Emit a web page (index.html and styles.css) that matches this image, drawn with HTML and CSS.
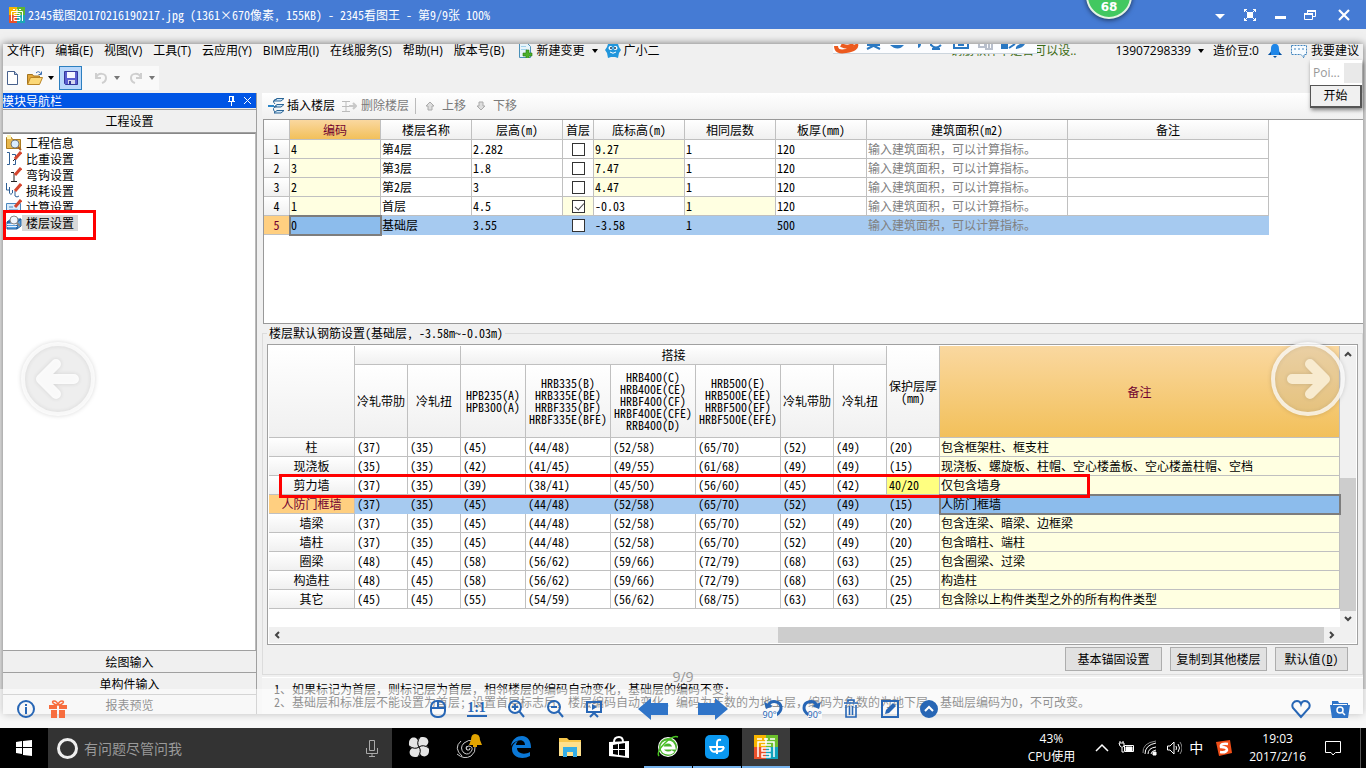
FILE: index.html
```html
<!DOCTYPE html>
<html lang="zh-CN">
<head>
<meta charset="utf-8">
<title>2345看图王</title>
<link rel="stylesheet" href="styles.css">
</head>
<body>
<header class="titlebar">
  <svg class="logo" viewBox="0 0 16 16"><path fill="#f7b500" d="M0 0h8v8H0z"/><path fill="#5db531" d="M8 0h8v8H8z"/><path fill="#e8502a" d="M0 8h8v8H0z"/><path fill="#1ba7b5" d="M8 8h8v8H8z"/><path fill="none" stroke="#fff" d="M2.500 14V4.500h11V14M4 2.500h2M10 2.500h2M5 6.500h6v2H5zM5 10.500h6v3H5zM8 2v4"/></svg>
  <h1 class="titletext">2345截图20170216190217.jpg (1361×670像素, 155KB) - 2345看图王 - 第9/9张 100%</h1>
  <div class="winbtns">
    <button aria-label="菜单"><svg viewBox="0 0 14 14"><path fill="#fff" d="M2 6h10l-5 5z"/></svg></button>
    <button aria-label="全屏"><svg viewBox="0 0 14 14"><path fill="#fff" d="M4 4h6v6H4z"/><path fill="none" stroke="#fff" d="M1.500 4V1.500H4M10 1.500h2.500V4M12.500 10v2.500H10M4 12.500H1.500V10M1 1l3 3M13 1l-3 3M13 13l-3-3M1 13l3-3"/></svg></button>
    <button aria-label="最小化"><svg viewBox="0 0 14 14"><path fill="#fff" d="M2 8h11v3H2z"/></svg></button>
    <button aria-label="还原"><svg viewBox="0 0 14 14"><path fill="none" stroke="#fff" d="M4.500 5V2.500h8v6H10M1.500 5.500h8v6h-8z"/><path fill="#fff" d="M4 2h9v2H4zM1 5h9v2H1z"/></svg></button>
    <button class="close" aria-label="关闭"><svg viewBox="0 0 14 14"><path fill="none" stroke="#fff" stroke-width="2.200" d="M2 2l10 10M12 2L2 12"/></svg></button>
  </div>
  <div class="speed"><span>68</span></div>
</header>

<main class="viewer">
  <div class="app">
    <div class="menubar">
      <nav class="menus">
        <a href="#">文件(F)</a><a href="#">编辑(E)</a><a href="#">视图(V)</a><a href="#">工具(T)</a><a href="#">云应用(Y)</a><a href="#">BIM应用(I)</a><a href="#">在线服务(S)</a><a href="#">帮助(H)</a><a href="#">版本号(B)</a>
      </nav>
      <button class="menubtn change"><svg class="ic16" viewBox="0 0 16 16"><path fill="#e8f4fb" stroke="#4a90b8" d="M2.500 .5h8l3 3v11h-11z"/><path fill="#9fd0ea" d="M4 3h5v1H4zM4 6h6v1H4z"/><path fill="#4caf2a" stroke="#2a7a12" stroke-width=".6" d="M9 7h3v3h3v3h-3v3H9v-3H6v-3h3z"/></svg>新建变更<i class="caret"></i></button>
      <button class="menubtn user"><svg class="ic16" viewBox="0 0 16 16"><path fill="#2196dc" d="M3 1q2-1 5-1t5 1l1 3 2 3-2 3-1 5-3-1H6l-3 1-1-5-2-3 2-3z"/><circle cx="5.500" cy="5" r="2" fill="#fff"/><circle cx="10.500" cy="5" r="2" fill="#fff"/><circle cx="6" cy="5" r="1" fill="#135"/><circle cx="10" cy="5" r="1" fill="#135"/><path fill="none" stroke="#fff" d="M5 9q3 2.500 6 0"/></svg>广小二</button>
      <div class="account">
        <a class="question" href="#">钢筋软件中是否可以设..</a>
        <button class="menubtn">13907298339<i class="caret"></i></button>
        <span class="beans">造价豆:0</span>
        <svg class="ic14" viewBox="0 0 14 14"><path fill="#1e86e8" d="M7 0c3 0 4 2 4 5 0 3 1 4 3 6H0c2-2 3-3 3-6 0-3 1-5 4-5z"/><path fill="#0b4e96" d="M5 12h4l-2 2zM0 11l3-3v3zM14 11l-3-3v3z"/></svg>
        <button class="menubtn advice"><svg class="ic16" viewBox="0 0 16 16"><path fill="#f6fbff" stroke="#3f83bd" stroke-dasharray="2 1" d="M.5 2.500h15v9H13V15l-3-3.500H.5z"/><path stroke="#3f83bd" stroke-dasharray="2 2" d="M3 6h10"/></svg>我要建议</button>
      </div>
    </div>
    <div class="toolrow">
      <div class="tools">
        <button aria-label="新建"><svg class="ic16" viewBox="0 0 16 16"><path fill="#fff" stroke="#47608c" d="M2.500 1.500h7l3 3v10h-10z"/><path fill="#b8c9e4" stroke="#47608c" d="M9.500 1.500v3h3"/></svg></button>
        <button class="wide" aria-label="打开"><svg class="ic16" viewBox="0 0 16 16"><path fill="#e2a73a" stroke="#a3741f" d="M.5 14V4.500h5l1 1.500h6v3"/><path fill="#fbd878" stroke="#b98426" d="M.5 14.500l3-7h12l-3 7z"/><path fill="none" stroke="#3b6eb0" d="M9 3q3-3 5 1M14.500 1.500v3h-3"/></svg><i class="caret"></i></button>
        <button class="save" aria-label="保存"><svg class="ic16" viewBox="0 0 16 16"><path fill="#5a5fd0" stroke="#34389a" d="M1.500 1.500h13v13h-12l-1-1z"/><path fill="#f4f6ff" d="M4 2h8v6H4z"/><path fill="#d5d8ee" d="M5 10h7v4H5z"/><path fill="#34389a" d="M6 11h2v3H6z"/></svg></button>
        <button class="wide dim" aria-label="撤销"><svg class="ic16" viewBox="0 0 16 16"><path fill="none" stroke="#cfcfcf" stroke-width="2" d="M3 3v5h5M3 8c2-6 10-5 10 0 0 2-1 4-4 5"/></svg><i class="caret"></i></button>
        <button class="wide dim" aria-label="重做"><svg class="ic16" viewBox="0 0 16 16"><path fill="none" stroke="#cfcfcf" stroke-width="2" d="M13 3v5H8M13 8C11 2 3 3 3 8c0 2 1 4 4 5"/></svg><i class="caret"></i></button>
      </div>
    </div>
    <div class="workspace">
      <aside class="nav song">
        <div class="navtitle"><span>模块导航栏</span>
          <svg class="pin" viewBox="0 0 26 10"><path fill="none" stroke="#fff" d="M2.500 0v5M6.500 0v5M2 .5h5M1 5.500h7M4.500 6v4M5.500 1v4M17 1l7 7M24 1l-7 7"/></svg>
        </div>
        <button class="navbtn">工程设置</button>
        <ul class="tree">
          <li><svg class="ic16" viewBox="0 0 16 16"><path fill="#e9b84c" stroke="#ab7b20" d="M.5 2.500h5l1 2h8v9H.5z"/><path fill="#fff3b0" d="M1 0h4v4H1z"/><circle cx="9" cy="9" r="4" fill="#d8ecff" stroke="#777"/><path stroke="#a35b20" stroke-width="2" d="M12 12l3 3"/></svg><a href="#">工程信息</a></li>
          <li><svg class="ic16" viewBox="0 0 16 16"><path fill="none" stroke="#2f5f95" d="M1 1.500h2.500v12H1M6 3.500h3.500v10H7"/><path stroke="#d5452d" stroke-width="3" d="M15 1L9 8"/><path stroke="#222" d="M9 8l-2 2"/></svg><a href="#">比重设置</a></li>
          <li><svg class="ic16" viewBox="0 0 16 16"><path fill="none" stroke="#222" d="M8 6v8M5 14.500h6M5 5.500h3"/><path stroke="#d5452d" stroke-width="3" d="M15 1L9 8"/></svg><a href="#">弯钩设置</a></li>
          <li><svg class="ic16" viewBox="0 0 16 16"><path fill="none" stroke="#2f5f95" d="M.5 0v7h3V4v6q1 3 3 0V7M9 8v5q2 2 4 0"/><path stroke="#d5452d" stroke-width="3" d="M15 1L9 8"/></svg><a href="#">损耗设置</a></li>
          <li><svg class="ic16" viewBox="0 0 16 16"><path fill="#d9ebfb" stroke="#4a86bd" d="M.5 4.500h14v9H.5z"/><path stroke="#4a86bd" d="M3 8h4M3 11h9"/><path stroke="#d5452d" stroke-width="3" d="M15 1L9 8"/></svg><a href="#">计算设置</a></li>
          <li class="sel"><svg class="ic16" viewBox="0 0 16 16"><path fill="#5aa2df" stroke="#1e5c9a" d="M1 7l4-3h10l-4 3zM1 7h10v7H1zM11 7l4-3v7l-4 3z"/><path stroke="#e8f3ff" d="M1 9.500h10M1 11.500h10"/><circle cx="8" cy="5" r="4" fill="#eef6fc" stroke="#888"/><path stroke="#888" stroke-width="2" d="M11 8l3 3"/></svg><a href="#">楼层设置</a></li>
        </ul>
        <div class="mark marknav"></div>
        <button class="navbtn">绘图输入</button>
        <button class="navbtn">单构件输入</button>
        <button class="navbtn last">报表预览</button>
      </aside>
      <section class="main">
        <div class="floorbar">
          <button><svg class="ic16" viewBox="0 0 16 16"><path fill="#cfe6f7" stroke="#2b6596" d="M6 3l3-2.500h7L13 3zM6 9l3-2.500h7L13 9zM6 15l3-2.500h7L13 15z"/><path fill="none" stroke="#2b6596" d="M9 1q-6 1-2 5M9 8q-6 2-2 6"/><path stroke="#2b86c9" stroke-width="2" d="M0 8h6"/></svg>插入楼层</button>
          <button class="off"><svg class="ic16" viewBox="0 0 16 16"><path fill="none" stroke="#bbb" d="M1 3.500h8M1 8.500h9M1 13.500h8M5 3v11"/><path fill="none" stroke="#c8c8c8" stroke-width="2" d="M8 8h7M12 5l3 3-3 3"/></svg>删除楼层</button>
          <i class="vsep"></i>
          <button class="off up"><svg class="ic16" viewBox="0 0 16 16"><path fill="#ddd" stroke="#aaa" d="M8 4l4 4h-2v4H6V8H4z"/></svg>上移</button>
          <button class="off"><svg class="ic16" viewBox="0 0 16 16"><path fill="#ddd" stroke="#aaa" d="M8 12l4-4h-2V4H6v4H4z"/></svg>下移</button>
        </div>
        <div class="floors song">
          <table class="grid ftable">
            <colgroup><col class="w26"><col class="w91"><col class="w91"><col class="w91"><col class="w31"><col class="w91"><col class="w91"><col class="w91"><col class="w201"><col class="w201"></colgroup>
            <thead><tr><th></th><th class="hot">编码</th><th>楼层名称</th><th>层高(m)</th><th>首层</th><th>底标高(m)</th><th>相同层数</th><th>板厚(mm)</th><th>建筑面积(m2)</th><th>备注</th></tr></thead>
            <tbody>
              <tr><th>1</th><td class="y">4</td><td>第4层</td><td>2.282</td><td class="c"><input type="checkbox" aria-label="首层"></td><td class="y">9.27</td><td>1</td><td>120</td><td class="hint">输入建筑面积，可以计算指标。</td><td></td></tr>
              <tr><th>2</th><td class="y">3</td><td>第3层</td><td>1.8</td><td class="c"><input type="checkbox" aria-label="首层"></td><td class="y">7.47</td><td>1</td><td>120</td><td class="hint">输入建筑面积，可以计算指标。</td><td></td></tr>
              <tr><th>3</th><td class="y">2</td><td>第2层</td><td>3</td><td class="c"><input type="checkbox" aria-label="首层"></td><td class="y">4.47</td><td>1</td><td>120</td><td class="hint">输入建筑面积，可以计算指标。</td><td></td></tr>
              <tr><th>4</th><td class="y">1</td><td>首层</td><td>4.5</td><td class="c y"><input type="checkbox" aria-label="首层" checked></td><td>-0.03</td><td class="y">1</td><td>120</td><td class="hint">输入建筑面积，可以计算指标。</td><td></td></tr>
              <tr class="cur"><th>5</th><td class="focus">0</td><td>基础层</td><td>3.55</td><td class="c"><input type="checkbox" aria-label="首层"></td><td>-3.58</td><td>1</td><td>500</td><td class="hint">输入建筑面积，可以计算指标。</td><td></td></tr>
            </tbody>
          </table>
        </div>
        <fieldset class="rebar song">
          <legend>楼层默认钢筋设置(基础层, -3.58m~-0.03m)</legend>
          <div class="rbox">
            <div class="rview">
              <table class="grid rtable">
                <colgroup><col class="w86"><col class="w53"><col class="w53"><col class="w65"><col class="w85"><col class="w85"><col class="w85"><col class="w53"><col class="w53"><col class="w53"><col></colgroup>
                <thead>
                  <tr><th rowspan="2"></th><th colspan="2"></th><th colspan="6">搭接</th><th rowspan="2" class="tight">保护层厚<br>(mm)</th><th rowspan="2" class="hot">备注</th></tr>
                  <tr class="tall"><th>冷轧带肋</th><th>冷轧扭</th><th class="tight">HPB235(A)<br>HPB300(A)</th><th class="tight">HRB335(B)<br>HRB335E(BE)<br>HRBF335(BF)<br>HRBF335E(BFE)</th><th class="tight">HRB400(C)<br>HRB400E(CE)<br>HRBF400(CF)<br>HRBF400E(CFE)<br>RRB400(D)</th><th class="tight">HRB500(E)<br>HRB500E(EE)<br>HRBF500(EF)<br>HRBF500E(EFE)</th><th>冷轧带肋</th><th>冷轧扭</th></tr>
                </thead>
                <tbody>
                  <tr><th>柱</th><td>(37)</td><td>(35)</td><td>(45)</td><td>(44/48)</td><td>(52/58)</td><td>(65/70)</td><td>(52)</td><td>(49)</td><td>(20)</td><td class="y">包含框架柱、框支柱</td></tr>
                  <tr><th>现浇板</th><td>(35)</td><td>(35)</td><td>(42)</td><td>(41/45)</td><td>(49/55)</td><td>(61/68)</td><td>(49)</td><td>(49)</td><td>(15)</td><td class="y">现浇板、螺旋板、柱帽、空心楼盖板、空心楼盖柱帽、空档</td></tr>
                  <tr><th>剪力墙</th><td>(37)</td><td>(35)</td><td>(39)</td><td>(38/41)</td><td>(45/50)</td><td>(56/60)</td><td>(45)</td><td>(42)</td><td class="yy">40/20</td><td class="y">仅包含墙身</td></tr>
                  <tr class="cur"><th>人防门框墙</th><td>(37)</td><td>(35)</td><td>(45)</td><td>(44/48)</td><td>(52/58)</td><td>(65/70)</td><td>(52)</td><td>(49)</td><td>(15)</td><td class="focus">人防门框墙</td></tr>
                  <tr><th>墙梁</th><td>(37)</td><td>(35)</td><td>(45)</td><td>(44/48)</td><td>(52/58)</td><td>(65/70)</td><td>(52)</td><td>(49)</td><td>(20)</td><td class="y">包含连梁、暗梁、边框梁</td></tr>
                  <tr><th>墙柱</th><td>(37)</td><td>(35)</td><td>(45)</td><td>(44/48)</td><td>(52/58)</td><td>(65/70)</td><td>(52)</td><td>(49)</td><td>(20)</td><td class="y">包含暗柱、端柱</td></tr>
                  <tr><th>圈梁</th><td>(48)</td><td>(45)</td><td>(58)</td><td>(56/62)</td><td>(59/66)</td><td>(72/79)</td><td>(68)</td><td>(63)</td><td>(25)</td><td class="y">包含圈梁、过梁</td></tr>
                  <tr><th>构造柱</th><td>(48)</td><td>(45)</td><td>(58)</td><td>(56/62)</td><td>(59/66)</td><td>(72/79)</td><td>(68)</td><td>(63)</td><td>(25)</td><td class="y">构造柱</td></tr>
                  <tr><th>其它</th><td>(45)</td><td>(45)</td><td>(55)</td><td>(54/59)</td><td>(56/62)</td><td>(68/75)</td><td>(63)</td><td>(63)</td><td>(25)</td><td class="y">包含除以上构件类型之外的所有构件类型</td></tr>
                </tbody>
              </table>
              <div class="mark markrow"></div>
            </div>
            <div class="vbar"><svg viewBox="0 0 16 16"><path d="M5 10l3-3 3 3"/></svg><i></i><svg viewBox="0 0 16 16"><path d="M5 6l3 3 3-3"/></svg></div>
            <div class="hbar"><svg viewBox="0 0 16 16"><path d="M10 5L7 8l3 3"/></svg><i></i><svg viewBox="0 0 16 16"><path d="M6 5l3 3-3 3"/></svg></div>
          </div>
          <div class="actions"><button class="act">基本锚固设置</button><button class="act">复制到其他楼层</button><button class="act short">默认值(<u>D</u>)</button></div>
        </fieldset>
        <div class="notes song">
          <p>1、如果标记为首层，则标记层为首层，相邻楼层的编码自动变化，基础层的编码不变;</p>
          <p>2、基础层和标准层不能设置为首层; 设置首层标志后，楼层编码自动变化。编码为正数的为地上层，编码为负数的为地下层，基础层编码为0，不可改变。</p>
        </div>
      </section>
    </div>
    <div class="ime">
      <svg viewBox="0 0 195 10"><path fill="none" stroke="#ec5a1e" stroke-width="4" d="M3 2q0 7 10 5 12-2 10-7M8 1q8 4 12-1"/><g fill="none" stroke="#2a78c2" stroke-width="2"><path d="M34 1h13M40 0v3M40 2l-6 3M41 2l6 3M98 0v1q5 5 10 0M103 3v3M99 5h8M121 0v4h14V0M125 1h6M176 4l6-4"/></g><path fill="#2a78c2" d="M57 1h14q-6 7-14 0zM85 0h3q0 3-3 4zM168 0h7v5h-7zM183 5q-1-3 4-5h5q-2 4-9 5z"/><path fill="none" stroke="#b8bfcc" stroke-width="2" d="M146 0v3h6V0M153 0v5h6V0M156 0v4"/></svg>
    </div>
    <div class="pointer">
      <div class="phead">Poi...<i></i></div>
      <button>开始</button>
    </div>
  </div>
  <button class="flip prev" aria-label="上一张"><svg viewBox="0 0 76 76"><circle cx="38" cy="38" r="35"/><path d="M54 38H21M36 23L21 38l15 15"/></svg></button>
  <button class="flip next" aria-label="下一张"><svg viewBox="0 0 76 76"><circle cx="38" cy="38" r="35"/><path d="M22 38h33M40 23l15 15-15 15"/></svg></button>
  <div class="count">9/9</div>
  <div class="viewbar">
    <div class="vleft">
      <button aria-label="信息"><svg viewBox="0 0 20 20"><circle cx="10" cy="10" r="8" fill="none" stroke="#2766b5" stroke-width="2"/><path fill="#2766b5" d="M9 5h2v2H9zM9 8h2v7H9z"/></svg></button>
      <button aria-label="礼物"><svg viewBox="0 0 20 20"><path fill="#f76d3e" d="M1 6h8v4H1zM11 6h8v4h-8zM3 11h6v8H3zM11 11h6v8h-6z"/><path fill="none" stroke="#f76d3e" stroke-width="1.500" d="M10 6C5 6 3 2 6 2s4 4 4 4 1-4 4-4 1 4-4 4z"/></svg></button>
    </div>
    <div class="vmid">
      <button aria-label="鼠标"><svg viewBox="0 0 20 20"><rect x="3" y="2" width="14" height="16" rx="6"/><path d="M3 9h14M10 2v7"/></svg></button>
      <button class="one">1:1</button>
      <button aria-label="放大"><svg viewBox="0 0 20 20"><circle cx="9" cy="8" r="6"/><path d="M13 12l5 6M6 8h6M9 5v6"/></svg></button>
      <button aria-label="缩小"><svg viewBox="0 0 20 20"><circle cx="9" cy="8" r="6"/><path d="M13 12l5 6M6 8h6"/></svg></button>
      <button aria-label="幻灯片"><svg viewBox="0 0 20 20"><path d="M2 3h16M3 3v10h14V3M10 13v2M6 18l4-4 4 4"/><path fill="#2766b5" stroke="none" d="M8 5l5 3-5 3z"/></svg></button>
      <button class="arrow a1" aria-label="上一张"><svg viewBox="0 0 32 24"><path d="M1 12L14 1v5h17v12H14v5z"/></svg></button>
      <button class="arrow a2" aria-label="下一张"><svg viewBox="0 0 32 24"><path d="M31 12L18 1v5H1v12h17v5z"/></svg></button>
      <button class="rot" aria-label="左转"><svg viewBox="0 0 20 20"><path d="M5 7C8 0 18 2 18 9q0 4-5 7" stroke-width="3"/><path d="M1 3l2 7 7-3z" fill="#2766b5" stroke="none"/></svg><b>90°</b></button>
      <button class="rot right" aria-label="右转"><svg viewBox="0 0 20 20"><path d="M15 7C12 0 2 2 2 9q0 4 5 7" stroke-width="3"/><path d="M19 3l-2 7-7-3z" fill="#2766b5" stroke="none"/></svg><b>90°</b></button>
      <button aria-label="删除"><svg viewBox="0 0 20 20"><path d="M5 6v12h10V6M3 4h14M7 3V1h6v2M8.500 7v9M11.500 7v9" stroke-width="1.600"/></svg></button>
      <button aria-label="编辑"><svg viewBox="0 0 20 20"><path d="M2 2h16v16H2z"/><path fill="#2766b5" stroke="none" d="M5 15l1-4 7-7 3 3-7 7z"/></svg></button>
      <button aria-label="更多"><svg viewBox="0 0 20 20"><circle cx="10" cy="10" r="8" fill="#2766b5"/><path stroke="#fff" d="M6 12l4-4 4 4"/></svg></button>
    </div>
    <div class="vright">
      <button aria-label="收藏"><svg viewBox="0 0 20 20"><path fill="none" stroke="#2766b5" stroke-width="2" d="M10 18L2 9C0 5 3 2 6 2q3 0 4 3 1-3 4-3c3 0 6 3 4 7z"/></svg></button>
      <button aria-label="文件夹"><svg viewBox="0 0 20 20"><path fill="#2f74c8" d="M2 4V2h6l1 2h9v2h2l-2 13H2L0 6h2z"/><path stroke="#f9f9f9" d="M3 5.500h14"/><circle cx="10" cy="11" r="3" fill="none" stroke="#fff" stroke-width="1.500"/><path stroke="#fff" stroke-width="1.500" d="M12 13l3 3"/></svg></button>
    </div>
  </div>
</main>

<footer class="taskbar">
  <button class="start" aria-label="开始菜单"><svg viewBox="0 0 16 16"><path fill="#fff" d="M0 2l6-1v6H0zM7 1l9-1v7H7zM0 8h6v6l-6-1zM7 8h9v8l-9-1z"/></svg></button>
  <div class="search">
    <i class="ring"></i>
    <input type="text" aria-label="搜索" placeholder="有问题尽管问我">
    <svg viewBox="0 0 12 18"><path fill="none" stroke="#aaa" d="M3.500 1.500h5v10h-5zM.5 9v5.500h11V9M6 14v3M3 17.500h6"/></svg>
  </div>
  <button class="task" aria-label="风扇"><svg viewBox="0 0 24 24"><g fill="#e4e4e4"><path d="M12 12C9 9 10 1 16 2c5 0 7 5 4 8-2 2-5 2-8 2z"/><path d="M12 12c3-3 11-2 10 4 0 5-5 7-8 4-2-2-2-5-2-8z"/><path d="M12 12c3 3 2 11-4 10-5 0-7-5-4-8 2-2 5-2 8-2z"/><path d="M12 12c-3 3-11 2-10-4 0-5 5-7 8-4 2 2 2 5 2 8z"/></g><path fill="none" stroke="#000" d="M12 12q-3-4 1-10M12 12q4-3 10 1M12 12q3 4-1 10M12 12q-4 3-10-1"/></svg></button>
  <button class="task" aria-label="旋涡"><svg class="big" viewBox="0 0 28 28"><path fill="none" stroke="#ccc" d="M13 17q-2-2 1-4 5 0 4 4-3 6-8 3-5-5 0-10 5-4 9-2M16 15q0 3-3 2-2-2 0-4M3 21q7 6 14 2 5-4 4-9M8 23Q-1 15 7 8"/><path fill="#e2a400" d="M21 1q5 0 5 6l2 5H15l2-5q0-6 4-6zM19 12h4v2h-4z"/></svg></button>
  <button class="task edge" aria-label="Edge"><svg viewBox="0 0 24 24"><path fill="#0b78d7" d="M2 11C3 4 8 1 13 1c6 0 9 5 9 12H8c0 6 8 7 13 4v4c-7 4-18 2-18-7 0-4 3-7 6-8-2 2-2 4-2 4h9c0-7-10-6-14 1z"/></svg></button>
  <button class="task" aria-label="文件资源管理器"><svg viewBox="0 0 24 24"><path fill="#f6c64b" d="M1 3h8l2 2h12v5H1z"/><path fill="#fde08d" d="M1 7h22v14H1z"/><path fill="#34ade6" d="M5 12h14v10h-4v-5H9v5H5z"/></svg></button>
  <button class="task" aria-label="应用商店"><svg viewBox="0 0 24 24"><path fill="none" stroke="#fff" stroke-width="2" d="M7 7q0-5 5-5 4 0 4 5"/><path fill="#fff" d="M2 7l20-1v17L2 21z"/><path fill="#000" d="M6 10l5-1v5H6zM12 9l6-1v6h-6zM6 15h5v5l-5-1zM12 15h6v6l-6-1z"/></svg></button>
  <button class="task open" aria-label="浏览器"><svg viewBox="0 0 24 24"><circle cx="12" cy="12" r="10" fill="#fff"/><circle cx="12" cy="12" r="9" fill="#4cb52e"/><path fill="none" stroke="#fff" stroke-width="3" d="M6 13h12q-1-6-6-6-6 0-6 6 1 5 6 5 4 0 5-2"/><path fill="none" stroke="#46c21f" stroke-width="1.500" d="M3 21Q0 17 9 8q8-8 13-6"/></svg></button>
  <button class="task open" aria-label="同步"><svg viewBox="0 0 24 24"><rect width="24" height="24" rx="5" fill="#0b98f0"/><path fill="none" stroke="#fff" stroke-width="2" d="M12 19V8q0-4 4-3M6 12h13M5 11q1 8 7 5M19 12q-1 5-7 4"/></svg></button>
  <button class="task open active" aria-label="2345看图王"><svg viewBox="0 0 24 24"><path fill="#f7b500" d="M0 0h12v12H0z"/><path fill="#6cbf2c" d="M12 0h12v12H12z"/><path fill="#e8502a" d="M0 12h12v12H0z"/><path fill="#10a3bd" d="M12 12h12v12H12z"/><path fill="none" stroke="#fff" stroke-width="1.500" d="M4 22V7h16v15M3 4h5M10 4h4M16 4h5M7 10h10M8 13h8v3H8zM8 19h8v3H8zM12 3v7"/></svg></button>
  <div class="tray">
    <div class="cpu">43%<br>CPU使用</div>
    <svg class="t16 up1" viewBox="0 0 16 16"><path d="M2 11l6-6 6 6" stroke-width="1.500"/></svg>
    <svg class="t16" viewBox="0 0 16 16"><path d="M1 3h5v3q-2 3-4 0zM2 1v2M5 1v2M4 8v4h2M6.500 5.500h9v6h-9z"/><path fill="#fff" d="M8 7h6v4H8z"/></svg>
    <svg class="t16" viewBox="0 0 16 16"><path d="M3 14Q3 5 14 3M6 14q0-6 8-7M9 14q0-3 5-4" /><path fill="#fff" d="M11 12h3v3h-3z"/><path stroke="#888" d="M1 13Q0 3 14 1"/></svg>
    <svg class="t16" viewBox="0 0 16 16"><path d="M1.500 6v4H4l4 4V2L4 6zM10 6q1 2 0 4M12 4q3 4 0 8"/><path stroke="#888" d="M14 2q4 6 0 12"/></svg>
    <span class="zh">中</span>
    <svg class="t16 sg" viewBox="0 0 16 16"><path fill="#f04e18" stroke="none" d="M0 2l14-2 2 13-13 3z"/><path stroke="#fff" stroke-width="2.500" d="M12 4Q4 3 5 7q6 0 6 3-1 3-7 2"/></svg>
    <div class="clock">19:03<br>2017/2/16</div>
    <svg class="t16 msg" viewBox="0 0 16 16"><path d="M.5 1.500h15v11h-5L8 15l-2-2.500H.5z"/></svg>
    <i class="desk"></i>
  </div>
</footer>
</body>
</html>
```
FILE: styles.css
```css
* { box-sizing: border-box; }
body {
  margin: 0;
  min-height: 100vh;
  display: flex;
  flex-direction: column;
  font: 12px/16px "Open Sans", "Noto Sans CJK SC", sans-serif;
  color: #000;
  background: #f0f0f0;
  overflow: hidden;
}
button { border: 0; padding: 0; margin: 0; background: none; font: inherit; color: inherit; display: flex; align-items: center; justify-content: center; white-space: nowrap; }
a { color: inherit; text-decoration: none; }
p { margin: 0; }
svg { display: block; flex: none; }
.song { font-family: "Noto Sans Mono CJK SC", "Noto Sans CJK SC", monospace; }
.ic16 { width: 16px; height: 16px; }
.ic14 { width: 14px; height: 14px; }
.caret { border: 3px solid transparent; border-top: 4px solid #000; border-bottom: 0; }

.titlebar { position: relative; z-index: 3; height: 29px; display: flex; align-items: center; padding: 0 15px 0 9px; background: #457bd4; color: #fff; }
.logo { width: 16px; height: 16px; }
.titletext { margin: 0 0 0 3px; font: 12px/16px "Noto Sans Mono CJK SC", "Noto Sans CJK SC", monospace; white-space: pre; }
.winbtns { margin-left: auto; display: flex; gap: 16px; }
.winbtns svg { width: 14px; height: 14px; }
.winbtns .close { margin-left: 4px; }
.speed { position: absolute; right: 234px; top: -27px; width: 46px; height: 46px; border-radius: 50%; background: #42c860; border: 2px solid #e4f3e4; box-shadow: 0 1px 5px rgba(0,0,0,.6); display: flex; align-items: flex-end; justify-content: center; padding-bottom: 2px; font: bold 12px/16px "DejaVu Sans", sans-serif; color: #fff; }

.viewer { position: relative; flex: 1; display: flex; padding: 15px 3px 14px; }
.app { position: relative; flex: 1; display: flex; flex-direction: column; min-width: 0; background: #f0f0f0; box-shadow: 0 0 8px rgba(0,0,0,.55); }

.menubar { height: 14px; display: flex; align-items: center; padding: 0 4px; line-height: 12px; overflow: hidden; }
.menus { display: flex; gap: 11px; white-space: nowrap; }
.menubtn { gap: 4px; line-height: 12px; margin-left: 9px; }
.menubtn .caret { margin: 0 0 0 3px; }
.change { margin-left: 12px; }
.user { margin-left: 7px; gap: 3px; }
.account { margin-left: auto; display: flex; align-items: center; white-space: nowrap; }
.question { color: #3c6b14; margin-right: 30px; }
.beans { margin: 0 9px; }

.toolrow { height: 35px; padding: 8px 0 3px; }
.tools { display: flex; align-items: center; width: 156px; height: 24px; background: #f9f9f9; }
.tools button { height: 24px; width: 20px; }
.tools .wide { width: 35px; gap: 5px; }
.tools .dim .caret { border-top-color: #777; }
.tools .save { width: 23px; background: #b9d8fb; border: 1px solid #2c7fc0; margin: 0 7px 0 1px; }

.workspace { flex: 1; display: flex; gap: 5px; }
.nav { position: relative; flex: none; width: 254px; display: flex; flex-direction: column; border-right: 1px solid #a0a0a0; }
.navtitle { height: 15px; display: flex; justify-content: space-between; align-items: center; background: #0055e5; color: #fff; padding-right: 3px; margin-bottom: 1px; line-height: 15px; overflow: hidden; }
.navtitle span { margin-left: -1px; }
.pin { width: 26px; height: 10px; }
.navbtn { height: 22px; border-top: 1px solid #a0a0a0; background: #f0f0f0; }
.navtitle + .navbtn { height: 24px; border-bottom: 1px solid #a0a0a0; }
.navbtn.last { height: 20px; }
.tree { flex: 1; margin: 0; padding: 1px 3px; list-style: none; background: #fff; border-top: 1px solid #888; border-right: 1px solid #bbb; }
.tree li { height: 16px; display: flex; align-items: center; }
.tree a { padding: 0 4px; line-height: 16px; }
.tree .sel a { background: #d9d9d9; }
.mark { position: absolute; border: 3px solid #f00; pointer-events: none; }
.marknav { left: 0; top: 117px; width: 93px; height: 30px; }

.main { flex: 1; min-width: 0; display: flex; flex-direction: column; }
.floorbar { height: 26px; display: flex; align-items: center; gap: 6px; padding-left: 6px; background: linear-gradient(#fff, #f0f0f0); }
.floorbar button { gap: 3px; }
.floorbar .off { color: #7a7a7a; }
.floorbar .off .ic16 { margin-right: 1px; }
.floorbar .up { margin-right: 1px; }
.vsep { width: 1px; height: 16px; background: #bbb; }
.floors { flex: 1; margin-left: 1px; background: #fff; border: 1px solid #999; border-right: 0; }

.grid { border-collapse: separate; border-spacing: 0; table-layout: fixed; line-height: 16px; }
.grid th, .grid td { height: 19px; padding: 0 1px; border-right: 1px solid #c0c0c0; border-bottom: 1px solid #c0c0c0; white-space: nowrap; font-weight: normal; text-align: left; }
.grid td { overflow: hidden; line-height: 16px; }
.grid th { text-align: center; padding: 0; background: linear-gradient(#fff, #f0f0f0); }
.grid .hot { background: linear-gradient(#fad8a0, #f2c05a); color: #700030; }
.grid .y { background: #ffffe1; }
.grid .yy { background: #ffff80; }
.grid .c { text-align: center; padding: 0; }
.grid .hint { color: #808080; }
.grid .cur td { background: #a6caf0; border-color: #a6caf0; }
.grid .cur th { background: #ffcf80; color: #700030; }
.grid .cur .focus { background: #8cbcec; outline: 2px solid #7d7d7d; outline-offset: -1px; }
.ftable { width: 1005px; }
.ftable thead th { height: 20px; }
.ftable input { appearance: none; display: block; width: 13px; height: 13px; margin: 0 auto; border: 1px solid #333; background: #fff; }
.ftable input:checked::after { content: ""; display: block; width: 4px; height: 8px; margin: 0 0 0 4px; border: solid #444; border-width: 0 1px 1px 0; transform: rotate(42deg); }
.w26 { width: 26px; } .w31 { width: 31px; } .w53 { width: 53px; } .w65 { width: 65px; } .w85 { width: 85px; } .w86 { width: 86px; } .w91 { width: 91px; } .w201 { width: 201px; }

.rebar { margin: 1px 0 0; padding: 3px 4px 3px; min-width: 0; border: 1px solid #dcdcdc; }
.rebar legend { padding: 0 2px; line-height: 16px; }
.rbox { display: grid; grid-template-columns: minmax(0, 1fr) 16px; border: 1px solid #a0a0a0; padding: 1px; background: #fff; }
.rview { position: relative; padding-bottom: 18px; }
.rtable { width: 100%; }
.rtable td:not(:last-child) { padding-left: 2px; }
.rtable .tall th { height: 73px; }
.rtable .tight { line-height: 12px; }
.markrow { left: 10px; top: 128px; width: 811px; height: 24px; }
.vbar { display: flex; flex-direction: column; background: #f0f0f0; }
.vbar svg, .hbar svg { width: 16px; height: 16px; fill: none; stroke: #444; stroke-width: 2; }
.vbar i { flex: 1; margin-top: 116px; background: #cdcdcd; }
.hbar { grid-column: 1 / 3; display: flex; background: #f0f0f0; padding-right: 16px; }
.hbar i { flex: 1; margin-left: 46%; background: #cdcdcd; }
.actions { display: flex; justify-content: flex-end; gap: 8px; padding: 2px 10px 0 0; }
.act { height: 24px; width: 97px; background: #e1e1e1; border: 1px solid #adadad; }
.act.short { width: 73px; }
.notes { margin-top: 2px; height: 37px; border-top: 1px solid #fff; padding: 4px 12px 0; background: #f3f3f3; line-height: 13px; white-space: nowrap; overflow: hidden; }

.ime { position: absolute; left: 830px; top: 0; width: 204px; height: 10px; background: #fcfdff; border-bottom: 1px solid #ccd5dd; }
.ime svg { width: 195px; height: 10px; }
.pointer { position: absolute; right: 1px; top: 16px; width: 52px; background: #fff; box-shadow: 1px 2px 4px rgba(0,0,0,.5); }
.phead { display: flex; justify-content: space-between; align-items: center; height: 25px; padding-left: 3px; color: #999; }
.phead i { width: 18px; height: 20px; background: #e9e9e9; }
.pointer button { width: 100%; height: 23px; background: #f0f0f0; border: 1px solid #555; border-right-width: 2px; border-bottom-width: 2px; }

.flip { position: absolute; top: 50%; margin-top: -38px; width: 76px; height: 76px; }
.flip svg { width: 76px; height: 76px; overflow: visible; filter: drop-shadow(0 0 2px rgba(0,0,0,.2)); }
.flip circle { fill: rgba(210,210,210,.2); stroke: rgba(255,255,255,.75); stroke-width: 4; }
.flip path { fill: none; stroke: rgba(255,255,255,.85); stroke-width: 10; stroke-linecap: round; stroke-linejoin: round; }
.prev { left: 20px; }
.next { right: 20px; }
.next path { stroke: #f8ebcf; }
.count { position: absolute; left: 0; right: 0; bottom: 42px; text-align: center; font-size: 14px; line-height: 18px; color: #999; pointer-events: none; }
.viewbar { position: absolute; left: 0; right: 0; bottom: 0; height: 39px; display: grid; grid-template-columns: 1fr auto 1fr; align-items: center; padding: 0 16px; background: rgba(255,255,255,.56); color: #2766b5; }
.viewbar svg { width: 20px; height: 20px; }
.vleft { display: flex; gap: 12px; }
.vright { display: flex; gap: 19px; justify-content: flex-end; }
.vmid { display: flex; gap: 19px; align-items: center; }
.vmid button { position: relative; width: 20px; height: 20px; }
.vmid svg { fill: none; stroke: #2766b5; stroke-width: 2; }
.vmid .one { font: bold 14px/14px "Liberation Serif", serif; border-bottom: 2px solid #2766b5; height: 17px; }
.vmid .arrow { width: 32px; height: 24px; }
.vmid .arrow svg { width: 32px; height: 24px; fill: #2f74c8; stroke: none; }
.vmid .a1 { margin-left: 14px; }
.vmid .a2 { margin: 0 15px 0 9px; }
.rot b { position: absolute; left: 0; bottom: 0; font: 9px/9px "Noto Sans", sans-serif; background: #f9f9f9; }
.rot.right b { left: 6px; }

.taskbar { height: 40px; display: flex; align-items: stretch; background: #000; color: #fff; }
.start { width: 48px; }
.start svg { width: 16px; height: 16px; }
.search { width: 344px; display: flex; align-items: center; background: #333; padding: 0 14px 0 9px; margin-right: 3px; }
.ring { width: 21px; height: 21px; border: 3px solid #eee; border-radius: 50%; }
.search input { flex: 1; min-width: 0; margin: 0 6px; padding: 0; border: 0; background: none; font: 14px/20px "Noto Sans CJK SC", sans-serif; color: #fff; }
.search input::placeholder { color: #9a9a9a; opacity: 1; }
.search svg { width: 12px; height: 18px; }
.task { width: 48px; margin-right: 1px; border-bottom: 2px solid transparent; }
.task svg { width: 24px; height: 24px; }
.task .big { width: 28px; height: 28px; }
.edge { margin-left: 4px; }
.open { border-bottom-color: #76b2ec; }
.active { background: #3a3a3a; }
.tray { margin-left: auto; display: flex; align-items: center; white-space: nowrap; }
.tray svg { fill: none; stroke: #fff; }
.t16 { width: 16px; height: 16px; margin-left: 8px; }
.cpu, .clock { text-align: center; line-height: 18px; }
.up1 { margin-left: 18px; }
.zh { font-size: 14px; margin-left: 7px; }
.sg { margin-left: 13px; }
.clock { margin-left: 17px; }
.msg { margin-left: 19px; }
.desk { width: 1px; align-self: stretch; background: #555; margin: 0 5px 0 19px; }
.cpu { margin-right: 1px; }
```
